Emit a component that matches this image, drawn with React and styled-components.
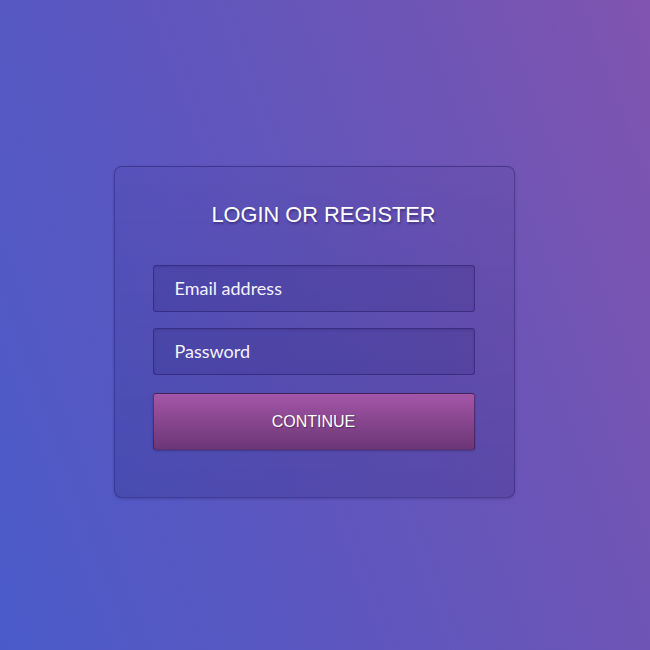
import styled, { createGlobalStyle } from "styled-components";

const GlobalStyle = createGlobalStyle`
  html, body {
    margin: 0;
    padding: 0;
    height: 100%;
  }

  body {
    background: linear-gradient(70deg, #4a5bc9 0%, #5d56bf 40%, #6c55b6 70%, #8154b0 100%);
    font-family: "Liberation Sans", Arial, sans-serif;
  }

  #root {
    min-height: 100%;
  }
`;

export default function App() {
  const onSubmit = (e) => e.preventDefault();

  return (
    <>
      <GlobalStyle />
      <Page>
        <Card onSubmit={onSubmit}>
          <Title>LOGIN OR REGISTER</Title>
          <Fields>
            <Input type="email" placeholder="Email address" />
            <Input type="password" placeholder="Password" />
            <Button type="submit">CONTINUE</Button>
          </Fields>
        </Card>
      </Page>
    </>
  );
}

const Page = styled.div`
  height: 650px;
  display: flex;
  justify-content: center;
  align-items: flex-start;
  padding: 166px 22px 0 0;
  box-sizing: border-box;
`;

const Card = styled.form`
  width: 401px;
  box-sizing: border-box;
  padding: 36px 39px 47px 38px;
  border: 1px solid rgba(30, 20, 90, 0.35);
  border-radius: 8px;
  background: linear-gradient(to bottom, rgba(20, 10, 80, 0.05), rgba(20, 10, 80, 0.16));
  box-shadow: 0 1px 3px rgba(20, 10, 60, 0.2);
`;

const Title = styled.h1`
  margin: 0 0 38px;
  padding-left: 20px;
  text-align: center;
  font-family: "Liberation Sans", Arial, sans-serif;
  font-weight: normal;
  font-size: 21.8px;
  line-height: 24px;
  color: #fff;
  text-shadow: 1px 2px 2px rgba(30, 20, 80, 0.45);
`;

const Fields = styled.div`
  display: flex;
  flex-direction: column;
  gap: 16px;
`;

const Input = styled.input`
  height: 47px;
  box-sizing: border-box;
  padding: 0 21px 2px;
  border: 1px solid rgba(30, 20, 90, 0.45);
  border-radius: 3px;
  background: rgba(30, 20, 100, 0.14);
  box-shadow: inset 0 1px 2px rgba(20, 10, 60, 0.15);
  font-family: "Lato", "Open Sans", sans-serif;
  font-size: 18px;
  color: #fff;
  outline: none;

  &::placeholder {
    color: #f4f2fb;
    opacity: 1;
  }
`;

const Button = styled.button`
  margin-top: 2px;
  height: 57px;
  border: 1px solid rgba(40, 20, 70, 0.55);
  border-radius: 3px;
  background: linear-gradient(to bottom, #a456a9 0%, #8a4890 45%, #6b3676 100%);
  box-shadow: 0 1px 2px rgba(20, 10, 50, 0.3);
  color: #fff;
  font-family: "Liberation Sans", Arial, sans-serif;
  font-size: 16px;
  text-shadow: 1px 1px 1px rgba(50, 20, 60, 0.5);
  cursor: pointer;
`;
